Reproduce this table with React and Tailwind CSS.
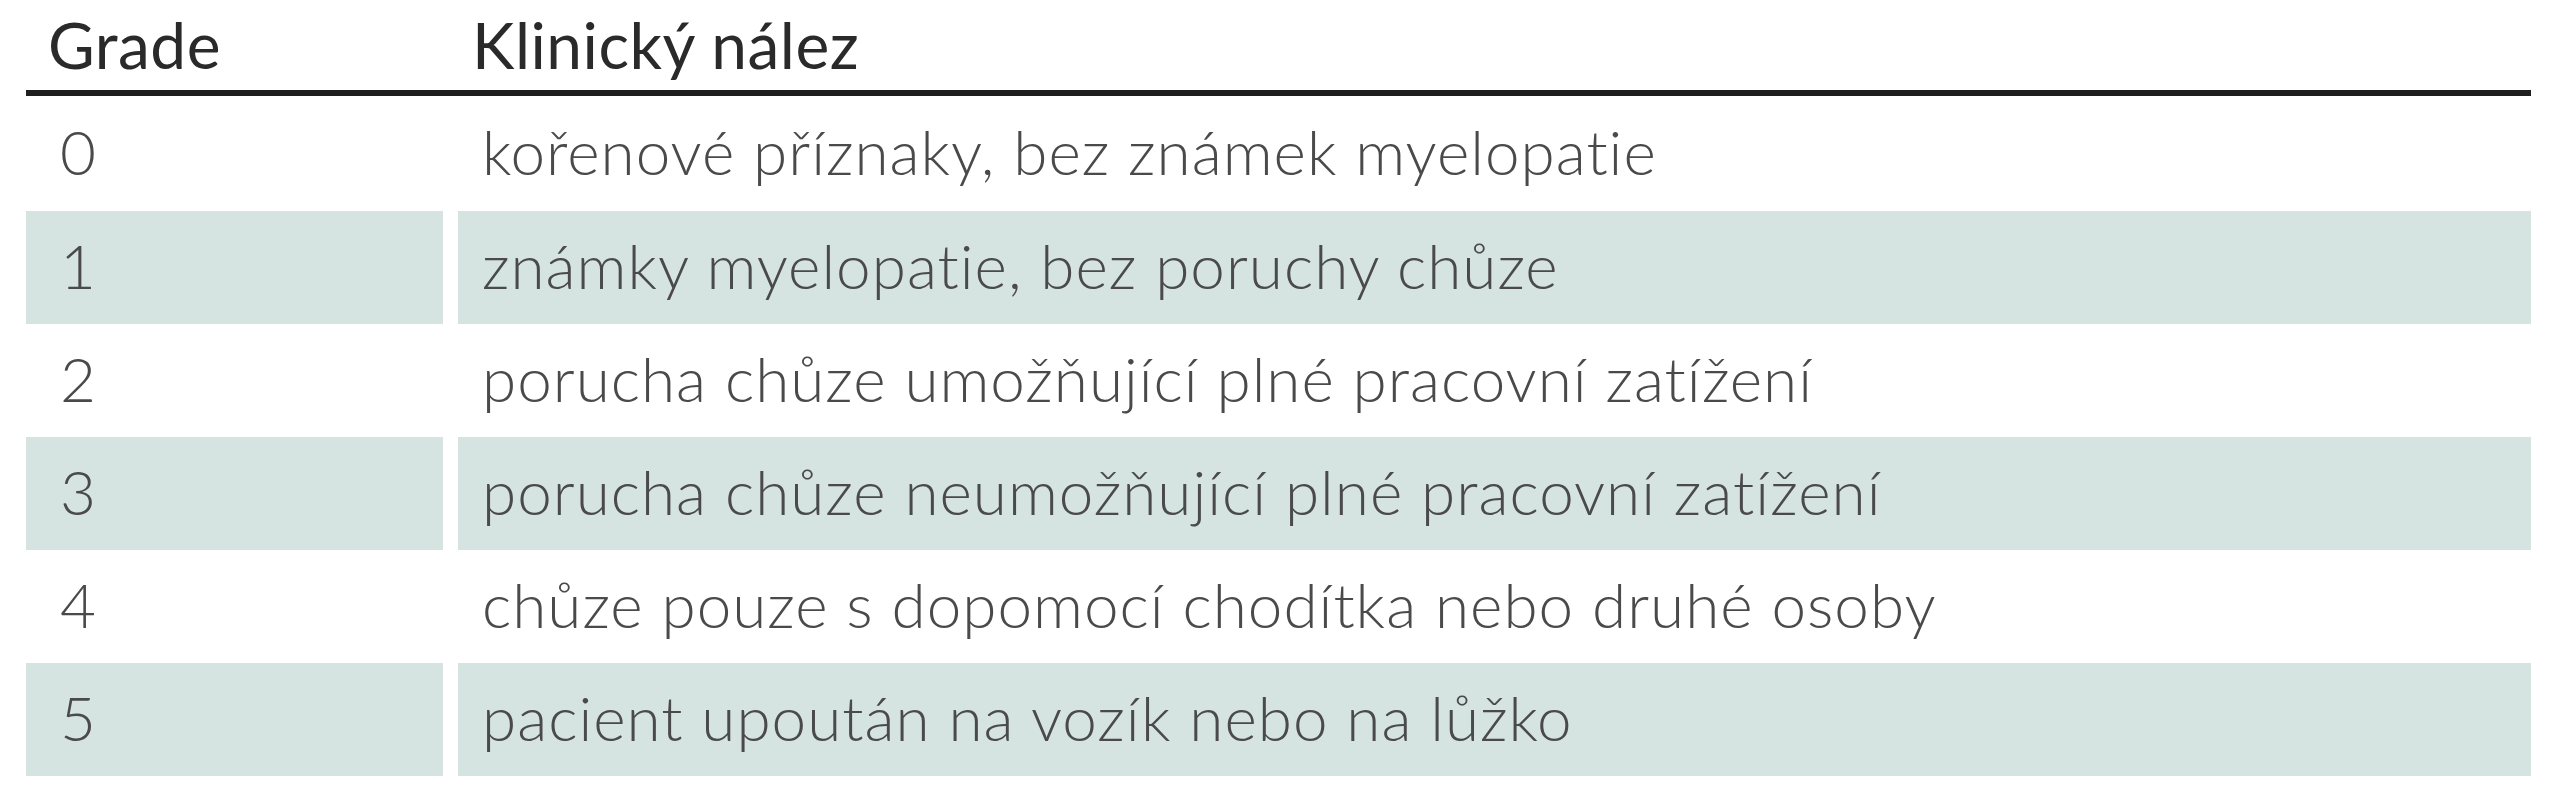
export default function App() {
  const rows = [
    ["0", "kořenové příznaky, bez známek myelopatie"],
    ["1", "známky myelopatie, bez poruchy chůze"],
    ["2", "porucha chůze umožňující plné pracovní zatížení"],
    ["3", "porucha chůze neumožňující plné pracovní zatížení"],
    ["4", "chůze pouze s dopomocí chodítka nebo druhé osoby"],
    ["5", "pacient upoután na vozík nebo na lůžko"],
  ];
  return (
    <div className="w-[2566px] h-[800px] bg-white" style={{ fontFamily: "Lato, 'Open Sans', sans-serif" }}>
      <div className="ml-[26px] w-[2505px]">
        <div className="flex gap-[15px] h-[90px] items-end pb-[13px] text-[64px] leading-none tracking-[0.5px] text-[#2a2a2a]">
          <div className="w-[417px] pl-[22px]">Grade</div>
          <div className="flex-1 pl-[14px]">Klinický nález</div>
        </div>
        <div className="h-[6px] bg-[#1f1f1f]" />
        {rows.map(([g, t], i) => (
          <div key={g} className={`flex gap-[15px] ${i === 0 ? "h-[115px]" : "h-[113px]"} text-[62px] leading-none font-light tracking-[1px] text-[#4a4a4a]`}>
            <div className={`w-[417px] pl-[34px] pb-[6px] flex items-center ${i % 2 === 1 ? "bg-[#d5e3e1]" : ""}`}>{g}</div>
            <div className={`flex-1 pl-[24px] pb-[6px] flex items-center ${i % 2 === 1 ? "bg-[#d5e3e1]" : ""}`}>{t}</div>
          </div>
        ))}
      </div>
    </div>
  );
}
